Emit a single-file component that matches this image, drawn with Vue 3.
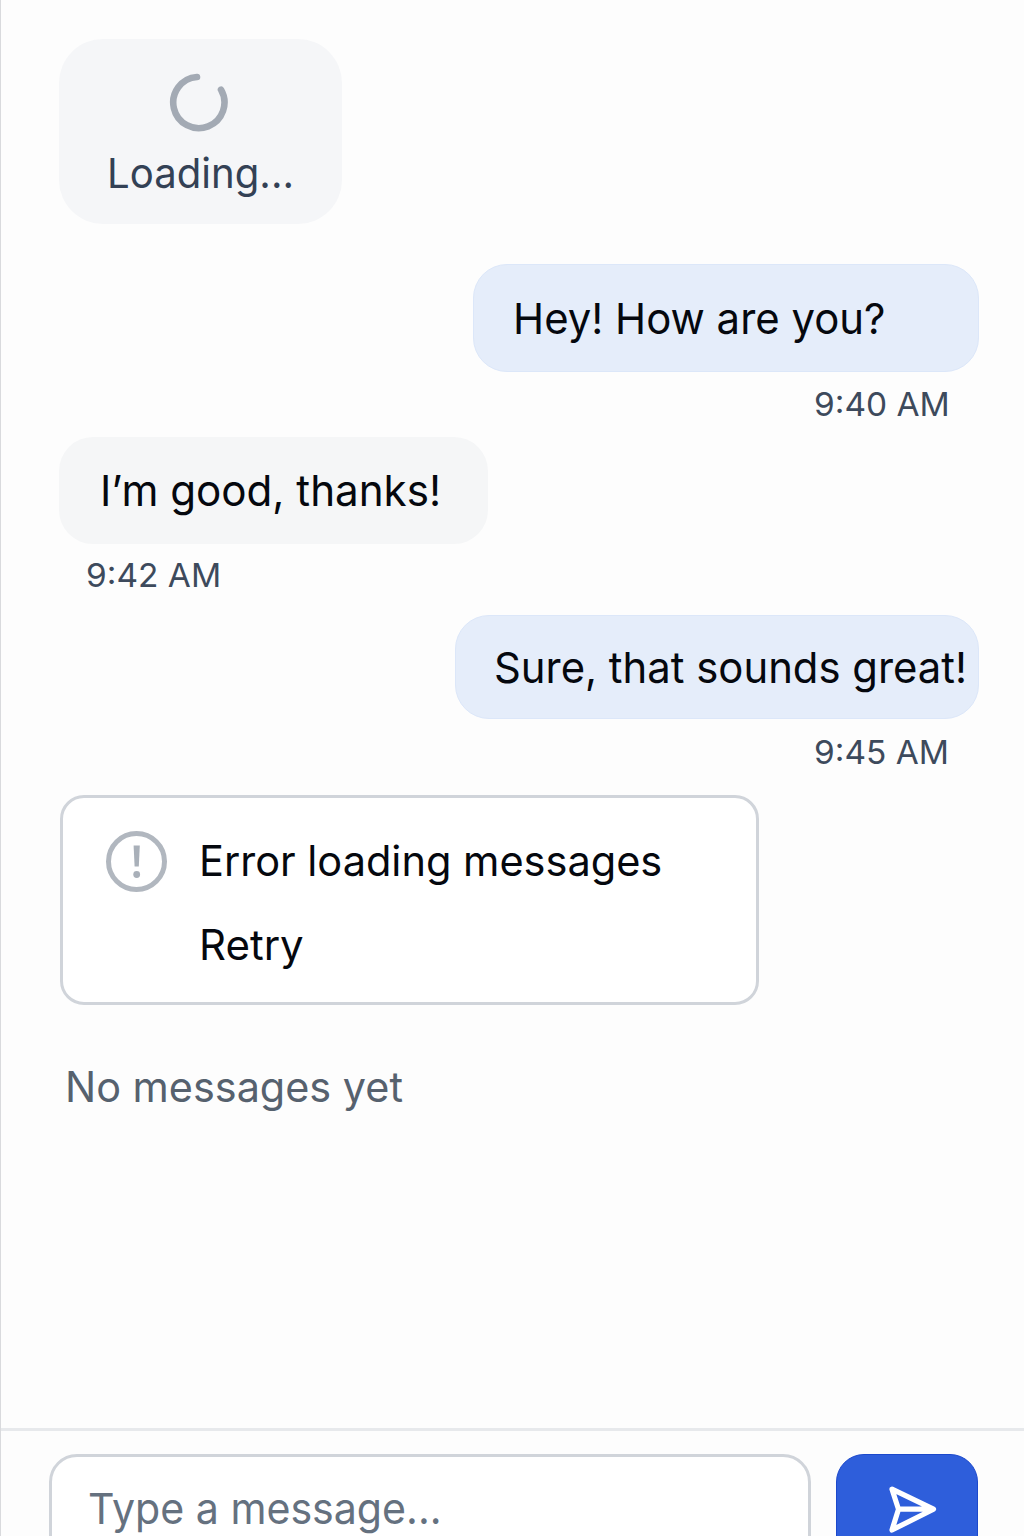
<script setup>
import { ref } from 'vue'

const messages = [
  { id: 1, side: 'sent', size: 'first', text: 'Hey! How are you?', time: '9:40 AM' },
  { id: 2, side: 'received', size: 'reply', text: 'I’m good, thanks!', time: '9:42 AM' },
  { id: 3, side: 'sent', size: 'last', text: 'Sure, that sounds great!', time: '9:45 AM' },
]
const draft = ref('')
</script>

<template>
  <div class="chat">
    <main class="thread">
      <div class="loading" role="status">
        <svg class="spinner" viewBox="0 0 60 60" fill="none">
          <path d="M28 5A25.6 25.6 0 1 0 52 17.7" stroke="#a3aab4" stroke-width="6.6" stroke-linecap="round" />
        </svg>
        <span class="loading-label"><span class="t">Loading...</span></span>
      </div>

      <div v-for="m in messages" :key="m.id" class="message" :class="[m.side, m.size]">
        <div class="bubble"><span class="t">{{ m.text }}</span></div>
        <time class="time"><span class="t">{{ m.time }}</span></time>
      </div>

      <section class="error">
        <svg class="alert" viewBox="0 0 62 62">
          <circle cx="30.5" cy="30.5" r="28" fill="none" stroke="#b1b7bf" stroke-width="5" />
          <path d="M27.6 14.5h6.2l-1 21h-4.2z" fill="#a9b0b9" />
          <circle cx="30.7" cy="43.5" r="3.4" fill="#a9b0b9" />
        </svg>
        <div class="error-body">
          <p class="error-text"><span class="t">Error loading messages</span></p>
          <button class="retry" type="button"><span class="t">Retry</span></button>
        </div>
      </section>

      <p class="empty"><span class="t">No messages yet</span></p>
    </main>

    <footer class="composer">
      <div class="field"><span class="t">{{ draft || 'Type a message...' }}</span></div>
      <button class="send" type="button" aria-label="Send">
        <svg class="plane" viewBox="0 0 50 50" fill="none" stroke="#fff" stroke-width="5.2" stroke-linejoin="round" stroke-linecap="round">
          <path d="M4 5.2L45.5 25.2L4 46L10.5 25.2ZM10.5 25.2H44" />
        </svg>
      </button>
    </footer>
  </div>
</template>

<style>
body {
  margin: 0;
  background: #fdfdfd;
}
</style>

<style scoped>
.chat {
  box-sizing: border-box;
  width: 1024px;
  height: 1536px;
  overflow: hidden;
  display: flex;
  flex-direction: column;
  border-left: 1px solid #d9dadd;
  background: #fdfdfd;
  color: #05080e;
  font-family: Inter, sans-serif;
  font-size: 43px;
  line-height: 52px;
}
.t {
  display: inline-block;
  white-space: nowrap;
  transform-origin: 0 50%;
}
.thread {
  box-sizing: border-box;
  height: 1428px;
  flex: none;
  display: flex;
  flex-direction: column;
  align-items: flex-start;
  padding: 39px 45px 0 58px;
}
.loading {
  box-sizing: border-box;
  width: 283px;
  height: 185px;
  border-radius: 44px;
  background: #f5f6f8;
  display: flex;
  flex-direction: column;
  padding: 33px 0 0 48px;
  color: #334155;
}
.spinner {
  width: 60px;
  height: 60px;
  margin-left: 62px;
}
.loading-label {
  margin-top: 15px;
  font-size: 41px;
}
.loading-label .t {
  transform: scaleX(0.979);
}
.message {
  display: flex;
  flex-direction: column;
}
.bubble {
  box-sizing: border-box;
  border-radius: 34px;
  padding: 27px 0 0 39px;
}
.sent {
  align-self: flex-end;
}
.sent .bubble {
  background: #e5edfa;
  border: 1px solid #dce7f9;
}
.received .bubble {
  background: #f5f6f7;
}
.first {
  margin-top: 40px;
}
.first .bubble {
  width: 506px;
  height: 108px;
}
.first .bubble .t {
  transform: scaleX(0.974);
}
.reply {
  margin-top: 12px;
}
.reply .bubble {
  width: 429px;
  height: 107px;
  padding-left: 41px;
}
.reply .bubble .t {
  transform: scaleX(0.98);
}
.last {
  margin-top: 18px;
}
.last .bubble {
  width: 524px;
  height: 104px;
  padding-top: 25px;
  padding-left: 38px;
}
.last .bubble .t {
  transform: scaleX(0.973);
}
.time {
  display: flex;
  height: 41px;
  margin-top: 12px;
  color: #3d4a5c;
  font-size: 33px;
  line-height: 40px;
}
.time .t {
  transform: scaleX(1.014);
}
.reply .time {
  margin-top: 11px;
  height: 42px;
}
.last .time {
  margin-top: 13px;
  height: 40px;
}
.sent .time {
  width: 135px;
  margin-left: auto;
  margin-right: 30px;
}
.received .time {
  margin-left: 27px;
}
.error {
  box-sizing: border-box;
  width: 699px;
  height: 210px;
  margin: 23px 0 0 1px;
  border: 3px solid #d0d4da;
  border-radius: 24px;
  background: #fff;
  display: flex;
  padding: 33px 0 0 43px;
}
.alert {
  width: 62px;
  height: 62px;
  flex: none;
}
.error-body {
  margin-left: 31px;
  font-size: 42px;
}
.error-text {
  margin: 4px 0 32px;
}
.error-text .t {
  transform: scaleX(0.988);
}
.retry {
  display: block;
  padding: 0;
  border: 0;
  background: none;
  color: inherit;
  font: inherit;
}
.empty {
  margin: 56px 0 0 6px;
  color: #56616e;
  font-size: 42px;
}
.empty .t {
  transform: scaleX(0.985);
}
.composer {
  box-sizing: border-box;
  flex: none;
  height: 160px;
  display: flex;
  align-items: flex-start;
  border-top: 3px solid #e7e9ec;
  padding: 23px 45px 0 48px;
}
.field {
  box-sizing: border-box;
  width: 762px;
  height: 110px;
  border: 3px solid #d0d4da;
  border-radius: 28px;
  background: #fff;
  padding: 25px 0 0 36px;
  color: #65717f;
}
.field .t {
  transform: scaleX(0.956);
}
.send {
  width: 142px;
  height: 110px;
  margin-left: 25px;
  padding: 29px 0 0 51px;
  border: 1px solid #1c49cc;
  border-radius: 28px;
  background: #2e5edb;
  display: flex;
  align-items: flex-start;
}
.plane {
  width: 50px;
  height: 50px;
}
</style>
